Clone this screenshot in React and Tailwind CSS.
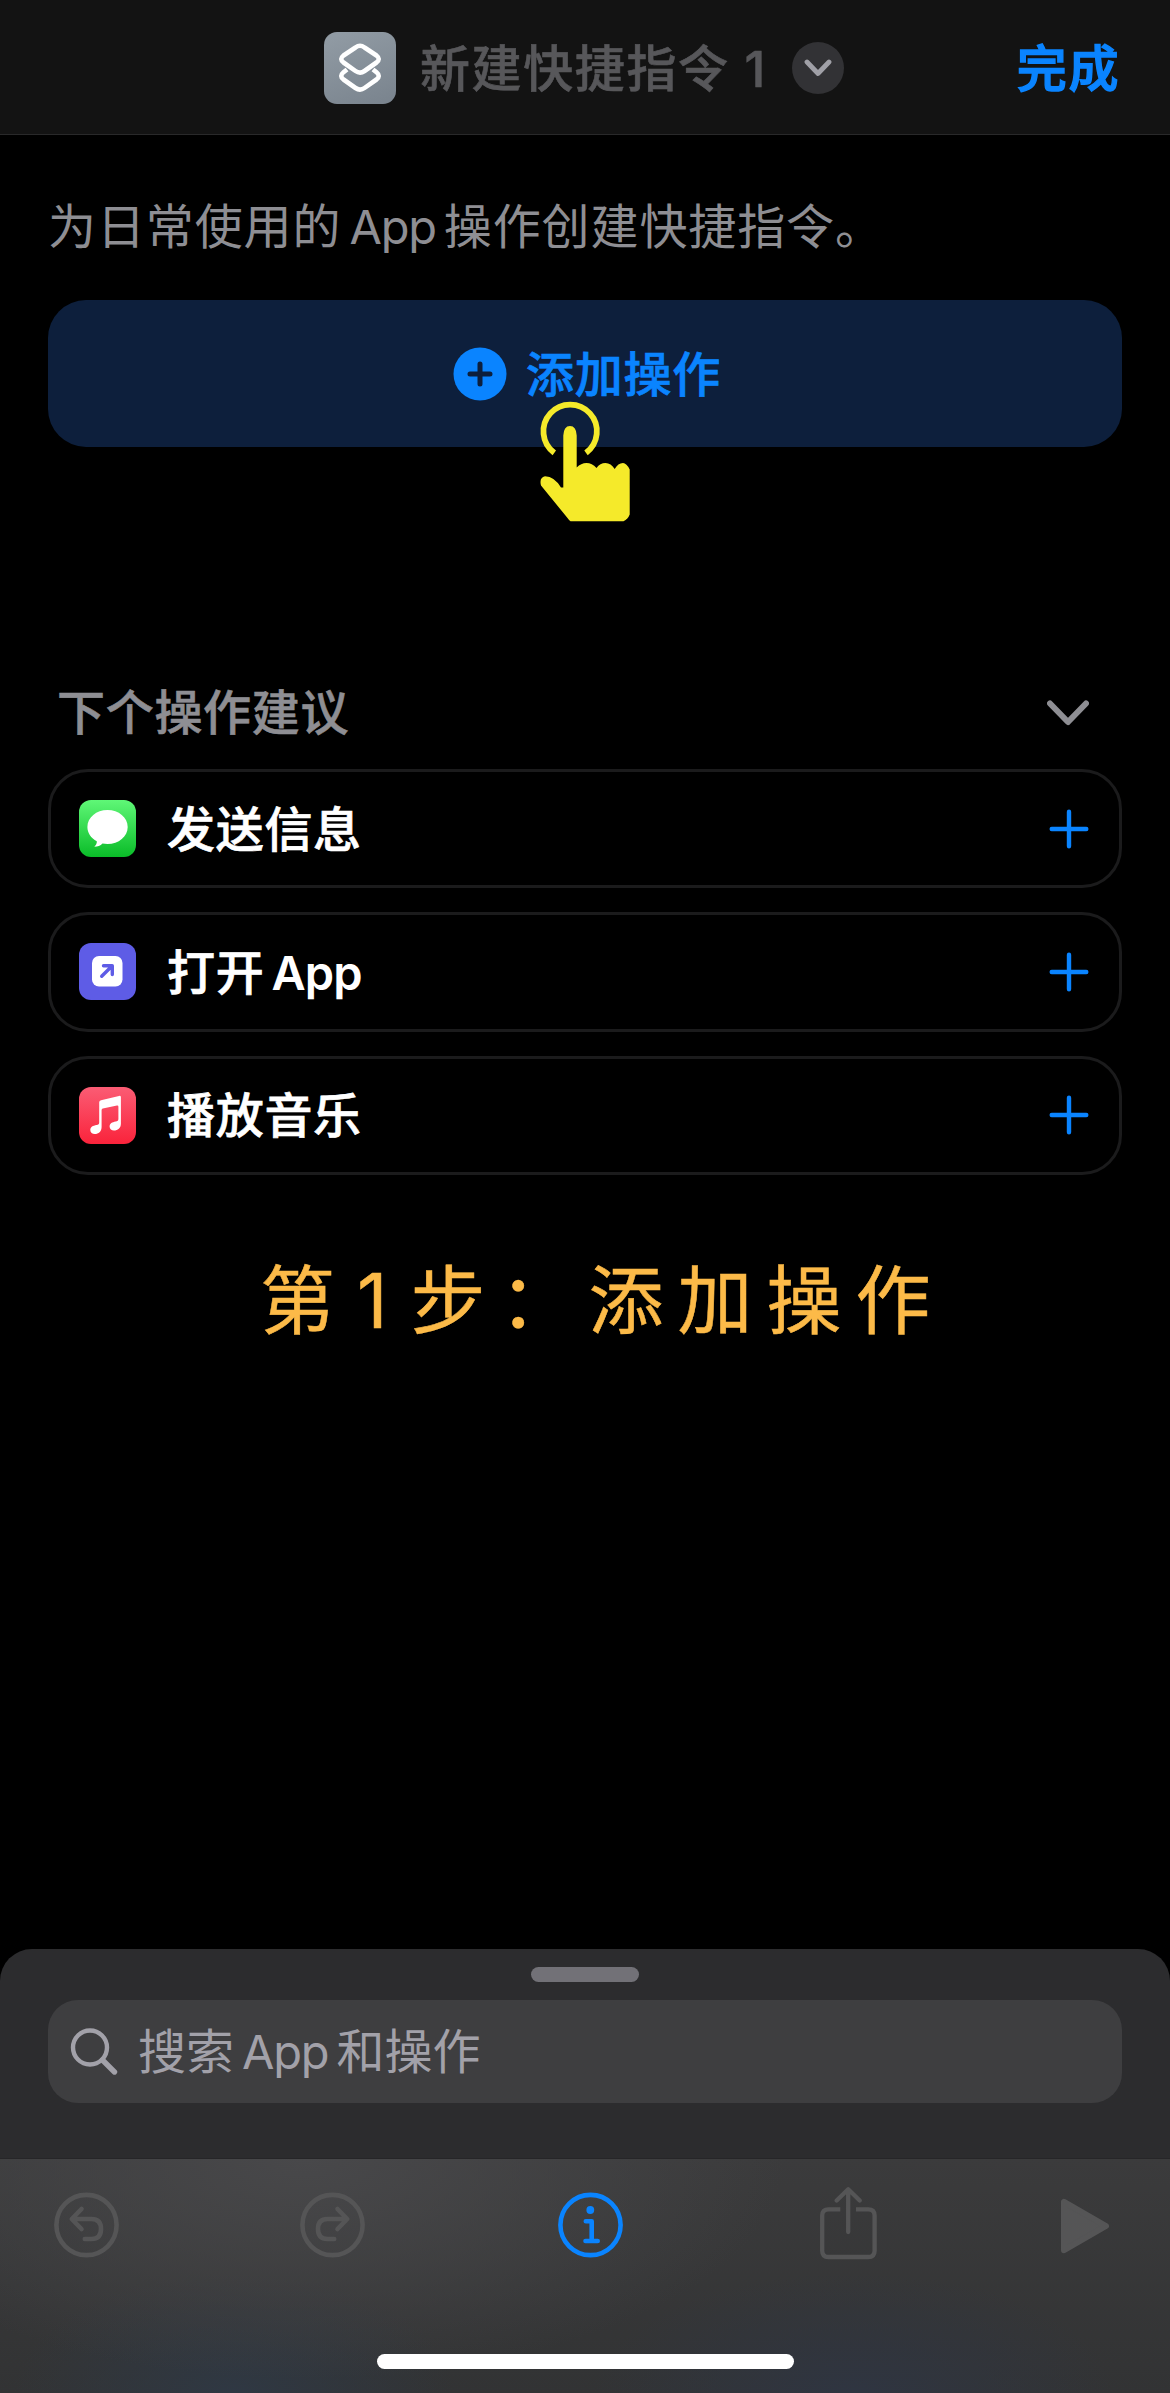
import React from 'react'

const font = "font-['Inter','Noto_Sans_CJK_SC',sans-serif]"

const ShortcutIcon = () => (
    <svg className="h-[72px] w-[72px] shrink-0" viewBox="0 0 72 72" fill="none">
        <defs>
            <linearGradient id="shortcut" x1="0.3" y1="0" x2="0.7" y2="1">
                <stop offset="0" stopColor="#909aa3" />
                <stop offset="1" stopColor="#7b858f" />
            </linearGradient>
        </defs>
        <rect width="72" height="72" rx="13" fill="url(#shortcut)" />
        <path d="M23 37.500L19.500 40.300Q15 44 19.500 47.500L31.500 56Q36 59.200 40.500 56L52.500 47.500Q57 44 52.500 40.300L49 37.500" stroke="white" strokeWidth="4.6" strokeLinejoin="round" />
        <path d="M31.500 15.500Q36 12 40.500 15.500L52.500 23.500Q57 27 52.500 30.500L40.500 39Q36 42.300 31.500 39L19.500 30.500Q15 27 19.500 23.500Z" stroke="white" strokeWidth="4.6" strokeLinejoin="round" />
    </svg>
)

const MessagesIcon = () => (
    <svg className="h-[57px] w-[57px]" viewBox="0 0 57 57">
        <defs>
            <linearGradient id="messages" x1="0" y1="0" x2="0" y2="1">
                <stop offset="0" stopColor="#5ff777" />
                <stop offset="1" stopColor="#0abc28" />
            </linearGradient>
        </defs>
        <rect width="57" height="57" rx="12" fill="url(#messages)" />
        <path d="M28.500 10C17.400 10 8.400 17.400 8.400 27C8.400 33 12 38.200 17.800 41.200C18 43.200 17 45.300 15.300 46.700C18.500 46.700 21.500 45.600 23.500 43.500C25 43.800 26.800 44 28.500 44C39.700 44 48.700 36.500 48.700 27C48.700 17.400 39.700 10 28.500 10Z" fill="white" />
    </svg>
)

const OpenAppIcon = () => (
    <svg className="h-[57px] w-[57px]" viewBox="0 0 57 57" fill="none">
        <rect width="57" height="57" rx="12" fill="#5e5ce6" />
        <rect x="13" y="13" width="30.500" height="30.500" rx="7" fill="white" />
        <path d="M22.700 33.300L33 23M24.500 22.700H33.300V31.500" stroke="#5e5ce6" strokeWidth="3.400" strokeLinecap="round" strokeLinejoin="round" />
    </svg>
)

const MusicIcon = () => (
    <svg className="h-[57px] w-[57px]" viewBox="0 0 57 57">
        <defs>
            <linearGradient id="music" x1="0" y1="0" x2="0" y2="1">
                <stop offset="0" stopColor="#fb5c74" />
                <stop offset="1" stopColor="#fa233b" />
            </linearGradient>
        </defs>
        <rect width="57" height="57" rx="12" fill="url(#music)" />
        <path d="M22 13.200Q20.200 13.600 20.200 15.300V35.500C20.200 37 19.500 37.600 17.500 38C14 38.700 11.300 39.900 11.300 43C11.300 45.600 13.300 47 15.800 47C19.500 47 22.600 44.600 22.600 40V23.200Q22.600 21.900 23.800 21.600L38 18.600Q39.400 18.300 39.400 19.700V32C39.400 33.500 38.600 34.200 36.600 34.600C33.200 35.300 30.600 36.500 30.600 39.600C30.600 42.300 32.600 43.600 35 43.600C38.700 43.600 41.900 41.200 41.900 36.800V10.300Q41.900 8.500 40 8.900Z" fill="white" />
    </svg>
)

const TapHand = () => (
    <svg className="absolute left-[490px] top-[100px] h-[126px] w-[96px]" viewBox="0 0 96 126" fill="none">
        <path d="M16.300 52.800A26.700 26.700 0 1 1 48 52.800" stroke="#f5ea2a" strokeWidth="5.800" />
        <path d="M25.300 35.500Q25.700 26 32 26T38.700 35.500V67.500Q43 63 48.500 63T58.500 68Q62 63 67.500 63T76.700 69Q80 63 85 63Q88.500 63 91.700 69.500V114.500Q90 119 85.500 121.300H32.500Q31.500 121 29.500 118L3 85.500Q1 77.500 7 76.200Q16.500 76.500 23 87.500H25.300Z" fill="#f5ea2a" />
    </svg>
)

const suggestions = [
    { id: 'message', icon: <MessagesIcon />, label: '发送信息' },
    { id: 'open', icon: <OpenAppIcon />, label: '打开', latin: 'App' },
    { id: 'music', icon: <MusicIcon />, label: '播放音乐' },
]

const SuggestionRow = ({ item }) => (
    <div className="flex h-[119.25px] items-center rounded-[40px] border-3 border-[#1b1b1c] pl-[28px] pr-[30px]">
        {item.icon}
        <p className="ml-[31px] flex-1 pt-[2px] text-[48px] font-medium leading-none tracking-[0.7px] text-white [-webkit-text-stroke:0.7px]">
            {item.label}
            {item.latin && <span className="ml-[7px] text-[47px] font-semibold tracking-[-0.8px] [-webkit-text-stroke:0px]">{item.latin}</span>}
        </p>
        <svg className="h-[40px] w-[40px]" viewBox="0 0 40 40" fill="none" stroke="#0a84ff" strokeWidth="4.4" strokeLinecap="round">
            <path d="M20 2.700V37.300M2.700 20H37.300" />
        </svg>
    </div>
)

const App = () => {
    return (
        <div className={`flex h-[2393px] w-[1170px] flex-col overflow-hidden bg-black ${font}`} lang="zh-CN">
            <header className="flex h-[135px] shrink-0 items-center border-b border-[#29292a] bg-[#131313] pl-[324px] pr-[50px] pt-[2px]">
                <ShortcutIcon />
                <h1 className="ml-[24px] whitespace-nowrap pt-[2px] text-[50px] font-medium leading-none tracking-[1.600px] text-[#57575a] [-webkit-text-stroke:0.6px]">
                    新建快捷指令<span className="ml-[15px]">1</span>
                </h1>
                <div className="ml-[25px] flex h-[52px] w-[52px] shrink-0 items-center justify-center rounded-full bg-[#323235]">
                    <svg className="h-[18px] w-[28px]" viewBox="0 0 28 18" fill="none" stroke="#a0a0a7" strokeWidth="4.800" strokeLinecap="round" strokeLinejoin="round">
                        <path d="M3 3L14 14.500L25 3" />
                    </svg>
                </div>
                <button className="ml-auto whitespace-nowrap pt-[2px] text-[50px] font-medium leading-none tracking-[1.600px] text-[#0a84ff] [-webkit-text-stroke:1.4px]">完成</button>
            </header>

            <main className="flex flex-1 flex-col px-[48px]">
                <p className="mt-[57px] whitespace-nowrap text-[48px] leading-[70px] tracking-[0.900px] text-[#8e8e93]">
                    为日常使用的<span className="mx-[8px] text-[47px] tracking-[-1.200px]">App</span>操作创建快捷指令。
                </p>

                <div className="relative mt-[38px] flex h-[147px] items-center justify-center rounded-[38px] bg-[#0d1f3c] pl-[4px]">
                    <svg className="h-[54px] w-[54px]" viewBox="0 0 54 54">
                        <circle cx="27" cy="27" r="26.500" fill="#0a84ff" />
                        <path d="M27 17V37M17 27H37" stroke="#0d1f3c" strokeWidth="5" strokeLinecap="round" />
                    </svg>
                    <span className="ml-[19px] pt-[2px] text-[48px] font-medium leading-none tracking-[0.700px] text-[#0a84ff] [-webkit-text-stroke:0.7px]">添加操作</span>
                    <TapHand />
                </div>

                <div className="mt-[229px] flex h-[70px] items-center pl-[9px] pr-[33px] pt-[3px]">
                    <h2 className="flex-1 text-[48px] font-medium leading-none tracking-[0.700px] text-[#8e8e93] [-webkit-text-stroke:0.6px]">下个操作建议</h2>
                    <svg className="h-[26px] w-[42px]" viewBox="0 0 42 26" fill="none" stroke="#8e8e93" strokeWidth="6" strokeLinecap="round" strokeLinejoin="round">
                        <path d="M3 3.500L21 22L39 3.500" />
                    </svg>
                </div>

                <div className="mt-[23px] flex flex-col gap-6">
                    {suggestions.map((item) => (
                        <SuggestionRow key={item.id} item={item} />
                    ))}
                </div>

                <p className="mt-[76px] whitespace-nowrap pl-[212px] text-[75px] leading-[100px] tracking-[14px] text-[#fcba48] [-webkit-text-stroke:0.5px]">
                    第<span className="ml-[8px] mr-[9px]">1</span>步：添加操作
                </p>
            </main>

            <section className="flex h-[209px] shrink-0 flex-col items-center rounded-t-[32px] bg-[#2c2c2e] px-[48px] pt-[18px]">
                <div className="h-[15px] w-[108px] rounded-full bg-[#727177]"></div>
                <div className="mt-[18px] flex h-[103px] w-full items-center rounded-[30px] bg-[#3e3e40] pl-[22px] text-[#a2a1a9]">
                    <svg className="h-[50px] w-[50px]" viewBox="0 0 50 50" fill="none" stroke="currentColor" strokeLinecap="round">
                        <circle cx="20" cy="20.500" r="17" strokeWidth="4.400" />
                        <path d="M32.500 33L44.500 45" strokeWidth="5.400" />
                    </svg>
                    <p className="ml-[18px] whitespace-nowrap pt-[1px] text-[48px] leading-none">
                        搜索<span className="mx-[8px] text-[47px] tracking-[-1.200px]">App</span>和操作
                    </p>
                </div>
            </section>

            <footer className="relative flex h-[235px] shrink-0 flex-col border-t border-[#262628] bg-[#343435] bg-[radial-gradient(ellipse_480px_220px_at_26%_0%,#48484a_0%,transparent_100%),radial-gradient(ellipse_220px_120px_at_20%_100%,#2f3843_0%,transparent_100%),radial-gradient(ellipse_260px_120px_at_73%_100%,#2f3541_0%,transparent_100%),linear-gradient(#3b3b3c,#323334)]">
                <div className="flex items-center pl-[54px] pt-[28px] text-[#555556]">
                    <svg className="h-[76px] w-[65px]" viewBox="0 -5.500 65 76" fill="none" stroke="currentColor" strokeWidth="4.600" strokeLinecap="round" strokeLinejoin="round">
                        <circle cx="32.500" cy="32.500" r="30.100" />
                        <path d="M27.500 16.500L17.800 26.500L27.500 36.500M18.500 26.500H37.500Q47 26.500 47 36.500T37.500 46.500H30.800" />
                    </svg>
                    <svg className="ml-[181px] h-[76px] w-[65px]" viewBox="0 -5.500 65 76" fill="none" stroke="currentColor" strokeWidth="4.600" strokeLinecap="round" strokeLinejoin="round">
                        <circle cx="32.500" cy="32.500" r="30.100" />
                        <path d="M37.500 16.500L47.200 26.500L37.500 36.500M46.500 26.500H27.500Q18 26.500 18 36.500T27.500 46.500H34.200" />
                    </svg>
                    <svg className="ml-[193px] h-[76px] w-[65px] text-[#0a84ff]" viewBox="0 -5.500 65 76" fill="none" stroke="currentColor" strokeWidth="4.600" strokeLinecap="round" strokeLinejoin="round">
                        <circle cx="32.500" cy="32.500" r="30.100" />
                        <circle cx="32.300" cy="17.500" r="3.900" fill="currentColor" stroke="none" />
                        <path d="M27.800 28.700H33.700V48.500M27.500 48.500H39.700" />
                    </svg>
                    <svg className="ml-[197px] h-[76px] w-[57px]" viewBox="0 0 57 76" fill="none" stroke="currentColor" strokeWidth="4.300" strokeLinecap="round" strokeLinejoin="round">
                        <path d="M20.300 22.300H8.500Q2.200 22.300 2.200 28.600V63.700Q2.200 70 8.500 70H48.300Q54.600 70 54.600 63.700V28.600Q54.600 22.300 48.300 22.300H36" strokeLinecap="butt" />
                        <path d="M28.200 2.500V45M16.700 13.500L28.200 2.300L39.700 13.500" />
                    </svg>
                    <svg className="ml-[184px] h-[76px] w-[48px]" viewBox="0 0 48 76" fill="currentColor" stroke="currentColor" strokeWidth="6" strokeLinejoin="round">
                        <path d="M3 14.800V63.200L45 39Z" />
                    </svg>
                </div>
                <div className="ml-[377px] mt-[91px] h-[15px] w-[417px] rounded-full bg-white"></div>
            </footer>
        </div>
    )
}

export default App
